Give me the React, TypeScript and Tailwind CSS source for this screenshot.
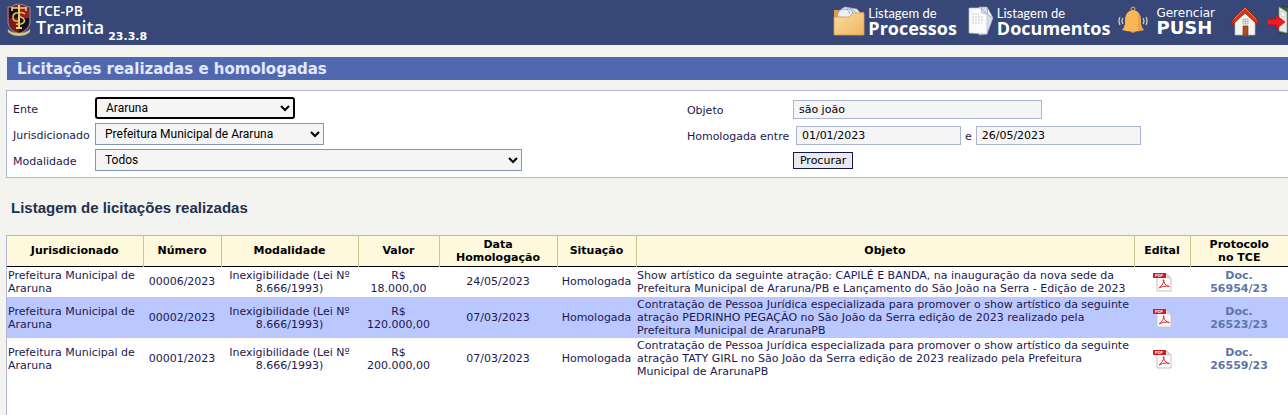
import { ReactNode, useState } from "react";

interface ILicitacao {
  numero: string;
  modalidade: string;
  valor: string;
  data: string;
  situacao: string;
  objeto: string;
  protocolo: string;
}

const licitacoes: ILicitacao[] = [
  {
    numero: "00006/2023",
    modalidade: "Inexigibilidade (Lei Nº 8.666/1993)",
    valor: "18.000,00",
    data: "24/05/2023",
    situacao: "Homologada",
    objeto:
      "Show artístico da seguinte atração: CAPILÉ E BANDA, na inauguração da nova sede da Prefeitura Municipal de Araruna/PB e Lançamento do São João na Serra - Edição de 2023",
    protocolo: "56954/23",
  },
  {
    numero: "00002/2023",
    modalidade: "Inexigibilidade (Lei Nº 8.666/1993)",
    valor: "120.000,00",
    data: "07/03/2023",
    situacao: "Homologada",
    objeto:
      "Contratação de Pessoa Jurídica especializada para promover o show artístico da seguinte atração PEDRINHO PEGAÇÃO no São João da Serra edição de 2023 realizado pela Prefeitura Municipal de ArarunaPB",
    protocolo: "26523/23",
  },
  {
    numero: "00001/2023",
    modalidade: "Inexigibilidade (Lei Nº 8.666/1993)",
    valor: "200.000,00",
    data: "07/03/2023",
    situacao: "Homologada",
    objeto:
      "Contratação de Pessoa Jurídica especializada para promover o show artístico da seguinte atração TATY GIRL no São João da Serra edição de 2023 realizado pela Prefeitura Municipal de ArarunaPB",
    protocolo: "26559/23",
  },
];

// ** Icons
const CrestIcon = () => (
  <svg width="24" height="34" viewBox="0 0 24 34" fill="none" aria-hidden="true">
    <path d="M1 4 Q6 4 7 2 Q12 0 17 2 Q18 4 23 4 V20 Q22 27 12 31 Q2 27 1 20Z" fill="#8f1f22" stroke="#8b8da0" />
    <path d="M2 5 H12 V30 Q3 26 2 20Z" fill="#15131c" />
    <path d="M12 15 H22 V20 Q21 26 12 30Z" fill="#15131c" />
    <path d="M2 15 H12 V30 Q3 26 2 20Z" fill="#7d1b20" />
    <path d="M5 5 H19 M5 4 V8 M19 4 V8" stroke="#edcf72" strokeWidth="1.6" />
    <path d="M12 2 V24 M9 25 H15" stroke="#edcf72" strokeWidth="2" />
    <path d="M11 10 H9 Q6 11 6 14 Q6 18 9 18 H11 M18 11 Q14 8 12 11 Q12 14 16 15 Q19 18 16 20 Q13 22 9 21" stroke="#e2bd5c" strokeWidth="1.6" />
    <path d="M1 26 Q4 30 12 30 Q20 30 23 26 L23 29 Q19 33 12 33 Q5 33 1 29Z" fill="#d9cd8c" stroke="#8b8358" strokeWidth=".5" />
  </svg>
);

const FolderIcon = () => (
  <svg width="32" height="30" viewBox="0 0 32 30" aria-hidden="true">
    <defs>
      <linearGradient id="folder" x1="0" y1="0" x2="1" y2="1">
        <stop stopColor="#fcdca0" />
        <stop offset="1" stopColor="#f0b55f" />
      </linearGradient>
    </defs>
    <path d="M1 4 H8 L10 6 H31 V16 H1Z" fill="#d99a4b" />
    <path d="M4 11 Q6 3 12 1 L24 3 L28 8 L22 12Z" fill="#eef1f8" stroke="#9aa5bd" strokeWidth=".6" />
    <path d="M9 4 Q15 1 17 8 M13 3 Q19 2 20 8 M17 2 L25 8" stroke="#8794b3" strokeWidth=".8" fill="none" />
    <path d="M1 11 H16 L20 7 H31 V29 H1Z" fill="url(#folder)" stroke="#d79b51" strokeWidth=".8" />
  </svg>
);

const DocumentsIcon = () => (
  <svg width="26" height="30" viewBox="0 0 26 30" aria-hidden="true">
    <path d="M11 1 H19 L25 12 L19 28 L11 29Z" fill="#d9dfe9" stroke="#9ba6bb" strokeWidth=".6" />
    <path d="M19 2 L20 9 L25 12" fill="#fff" stroke="#8d98b0" strokeWidth=".7" />
    <path d="M1 2 H13 L19 8 V28 L1 27Z" fill="#fafbfd" stroke="#b6bdcb" strokeWidth=".7" />
    <path d="M13 2 L14 7 L19 8Z" fill="#dce2ec" stroke="#9ba6bb" strokeWidth=".7" />
    <path d="M4 8 H11 M4 11 H15 M4 14 H15 M4 17 H14" stroke="#c6c9d1" strokeDasharray="2 1" />
  </svg>
);

const BellIcon = () => (
  <svg width="30" height="28" viewBox="0 0 30 28" fill="none" aria-hidden="true">
    <circle cx="15" cy="3" r="2" stroke="#f4b459" />
    <path d="M11 24 Q15 30 19 24Z" fill="#d98f32" />
    <path d="M4 24 Q6 22 7 18 Q6 5 15 4 Q24 5 23 18 Q24 22 26 24 Q15 27 4 24Z" fill="#f9b556" />
    <path d="M20 7 Q23 10 22 18 Q23 22 25 24 L20 25Z" fill="#e9a043" />
    <path d="M5 12 Q3 15 5 18 M2 11 Q0 15 2 19 M25 12 Q27 15 25 18 M28 11 Q30 15 28 19" stroke="#e7d9b5" strokeWidth="1.2" />
  </svg>
);

const HomeIcon = () => (
  <svg width="28" height="30" viewBox="0 0 28 30" aria-hidden="true">
    <path d="M4 14 L14 6 L24 14 V29 H4Z" fill="#f4f3ef" stroke="#b7b4ad" strokeWidth=".7" />
    <path d="M14 1 L27 14 V19 L14 7 L1 19 V14Z" fill="#d73517" stroke="#8f1d0c" strokeWidth=".8" />
    <path d="M3 13 L14 2 L25 13" stroke="#f47a52" fill="none" />
    <path d="M12 20 H17 V29 H12Z" fill="#a8501f" stroke="#77300f" strokeWidth=".6" />
    <path d="M12 13 H17 V18 H12Z M14.500 13 V18 M12 15.500 H17" fill="#e6e9ec" stroke="#a9a9a9" strokeWidth=".7" />
  </svg>
);

const ExitIcon = () => (
  <svg width="21" height="28" viewBox="0 0 21 28" aria-hidden="true">
    <path d="M12 1 H21 V27 H12Z" fill="#3f7f3b" stroke="#2b3c2c" />
    <path d="M12 2 H21 V27 L18 22 V8Z" fill="#2f6b33" />
    <path d="M12 1 L20 6 V27 L12 25Z" fill="#e9e9e6" stroke="#8f928e" strokeWidth=".7" />
    <path d="M14 5 L18 7 V11 L14 10Z" fill="#f8f8f7" stroke="#b9b9b5" strokeWidth=".6" />
    <path d="M0 13 H9 V9 L18 16 L9 23 V19 H0Z" fill="#ed1c24" stroke="#a90d13" strokeWidth=".7" />
  </svg>
);

const PdfIcon = () => (
  <svg width="20" height="20" viewBox="0 0 20 20" className="mx-auto" aria-hidden="true">
    <path d="M5 2 H15 L19 6 V19 H5Z" fill="#fbfbfb" stroke="#c4c4c4" />
    <path d="M15 2 V6 H19Z" fill="#dedede" stroke="#bdbdbd" strokeWidth=".6" />
    <path d="M7 16 Q11 13 12 9 Q12 7 11 8 Q12 13 17 15 Q18 14 16 14 Q10 14 7 16Z" fill="none" stroke="#e0232b" strokeWidth=".9" />
    <path d="M1 1 H14 V6 H1Z" fill="#cf1820" />
    <text x="3" y="5" fontSize="4" fontWeight="bold" fill="#fff" fontFamily="Liberation Sans">PDF</text>
  </svg>
);

// ** UI
const NavText = ({ top, bottom }: { top: string; bottom: string }) => (
  <span className="flex flex-col">
    <span className="font-['Lato',sans-serif] text-[13px] leading-[14px]">{top}</span>
    <span className="font-['Open_Sans',sans-serif] text-lg leading-4 font-bold">{bottom}</span>
  </span>
);

const Field = ({ id, label, wide, children }: { id: string; label: string; wide?: boolean; children: ReactNode }) => (
  <div className="flex h-[26px] items-center">
    <label htmlFor={id} className={`shrink-0 pt-0.5 whitespace-nowrap ${wide ? "w-[106px]" : "w-[82px]"}`}>
      {label}
    </label>
    {children}
  </div>
);

const selectStyle = "h-[22px] bg-[#f5f5f5] pl-[5px] font-['Roboto',sans-serif] text-xs text-black";
const inputStyle = "h-[19px] border border-[#aab6d0] bg-[#f5f5f5] px-[5px] text-[11px] text-black";
const thStyle = "border-r border-[#cfc58d] px-1 last:border-r-0";

const App = () => {
  const [filtro, setFiltro] = useState({
    objeto: "são joão",
    inicio: "01/01/2023",
    fim: "26/05/2023",
  });

  return (
    <div className="flex min-h-screen flex-col overflow-hidden bg-[#f3f4ef] font-['DejaVu_Sans',Verdana,sans-serif] text-[11px] leading-[13px] text-[#1c1850]">
      <header className="flex h-[45px] items-start justify-between bg-[#364778] text-white">
        <a href="#inicio" className="flex items-start pt-[3px] pl-[7px]">
          <CrestIcon />
          <span className="ml-[5px] flex flex-col font-['Open_Sans',sans-serif] font-semibold">
            <span className="text-sm leading-4">TCE-PB</span>
            <span className="text-lg leading-4">Tramita</span>
          </span>
          <span className="mt-[27px] ml-1 font-bold">23.3.8</span>
        </a>
        <nav className="flex shrink-0 items-start pt-[6px]">
          <a href="#processos" className="flex gap-[3px]">
            <FolderIcon />
            <NavText top="Listagem de" bottom="Processos" />
          </a>
          <a href="#documentos" className="ml-[11px] flex gap-[3px]">
            <DocumentsIcon />
            <NavText top="Listagem de" bottom="Documentos" />
          </a>
          <a href="#push" className="ml-2 flex gap-2">
            <BellIcon />
            <span className="flex flex-col">
              <span className="text-xs leading-[14px]">Gerenciar</span>
              <span className="text-lg leading-4 font-bold">PUSH</span>
            </span>
          </a>
          <a href="#home" aria-label="Início" className="ml-4">
            <HomeIcon />
          </a>
          <a href="#sair" aria-label="Sair" className="ml-2">
            <ExitIcon />
          </a>
        </nav>
      </header>

      <main className="flex flex-1 flex-col pt-3 pl-[6px]">
        <h1 className="ml-px h-[23px] bg-[#5068b0] pl-[10px] text-[15px] leading-[25px] font-bold text-[#e4e8ff]">
          Licitações realizadas e homologadas
        </h1>

        <form
          className="mt-[10px] grid grid-cols-[37fr_33fr] border-y border-l border-[#b3b6d6] bg-white py-1 pl-[6px]"
          onSubmit={(event) => event.preventDefault()}
        >
          <div>
            <Field id="ente" label="Ente">
              <select id="ente" className={`${selectStyle} w-[200px] rounded-[3px] border-2 border-black`}>
                <option>Araruna</option>
              </select>
            </Field>
            <Field id="jurisdicionado" label="Jurisdicionado">
              <select id="jurisdicionado" className={`${selectStyle} w-[229px] border border-[#8199b5]`}>
                <option>Prefeitura Municipal de Araruna</option>
              </select>
            </Field>
            <Field id="modalidade" label="Modalidade">
              <select id="modalidade" className={`${selectStyle} w-[427px] border border-[#8199b5]`}>
                <option>Todos</option>
              </select>
            </Field>
          </div>
          <div className="h-[78px] pt-px">
            <Field id="objeto" label="Objeto" wide>
              <input
                id="objeto"
                className={`${inputStyle} w-[249px]`}
                value={filtro.objeto}
                onChange={(event) => setFiltro({ ...filtro, objeto: event.target.value })}
              />
            </Field>
            <Field id="inicio" label="Homologada entre" wide>
              <input
                id="inicio"
                className={`${inputStyle} ml-[3px] w-[165px]`}
                value={filtro.inicio}
                onChange={(event) => setFiltro({ ...filtro, inicio: event.target.value })}
              />
              <label htmlFor="fim" className="mx-1 pt-0.5">
                e
              </label>
              <input
                id="fim"
                className={`${inputStyle} w-[165px]`}
                value={filtro.fim}
                onChange={(event) => setFiltro({ ...filtro, fim: event.target.value })}
              />
            </Field>
            <div className="pt-1 pl-[106px]">
              <button type="submit" className="h-[17px] border border-[#0f1a4a] bg-[#e9e9ef] px-[6px] leading-[15px] text-black">
                Procurar
              </button>
            </div>
          </div>
        </form>

        <h2 className="mt-5 pl-[5px] font-['Liberation_Sans',Arial,sans-serif] text-[15px] leading-5 font-bold text-[#25304f]">
          Listagem de licitações realizadas
        </h2>

        <section className="mt-[17px] flex-1 border-t border-l border-[#b3b6d6] bg-white">
          <table className="w-full table-fixed border-collapse">
            <colgroup>
              <col className="w-[136px]" />
              <col className="w-[78px]" />
              <col className="w-[137px]" />
              <col className="w-[81px]" />
              <col className="w-[118px]" />
              <col className="w-[79px]" />
              <col />
              <col className="w-[56px]" />
              <col className="w-[98px]" />
            </colgroup>
            <thead className="border-b border-black bg-[#fef8dc] text-black">
              <tr className="h-[30px]">
                <th className={thStyle}>Jurisdicionado</th>
                <th className={thStyle}>Número</th>
                <th className={thStyle}>Modalidade</th>
                <th className={thStyle}>Valor</th>
                <th className={thStyle}>Data Homologação</th>
                <th className={thStyle}>Situação</th>
                <th className={thStyle}>Objeto</th>
                <th className={thStyle}>Edital</th>
                <th className={thStyle}>
                  Protocolo
                  <br />
                  no TCE
                </th>
              </tr>
            </thead>
            <tbody>
              {licitacoes.map((item) => (
                <tr key={item.numero} className="h-[31px] text-center even:bg-[#bbc7ff]">
                  <td className="p-px text-left">Prefeitura Municipal de Araruna</td>
                  <td className="p-px">{item.numero}</td>
                  <td className="p-px">{item.modalidade}</td>
                  <td className="p-px">
                    R$
                    <br />
                    {item.valor}
                  </td>
                  <td className="p-px">{item.data}</td>
                  <td className="p-px">{item.situacao}</td>
                  <td className="p-px text-left">{item.objeto}</td>
                  <td className="p-px">
                    <a href={`#edital-${item.numero}`} aria-label="Edital em PDF">
                      <PdfIcon />
                    </a>
                  </td>
                  <td className="p-px">
                    <a href={`#doc-${item.protocolo}`} className="font-bold text-[#5d76a5]">
                      Doc.
                      <br />
                      {item.protocolo}
                    </a>
                  </td>
                </tr>
              ))}
            </tbody>
          </table>
        </section>
      </main>
    </div>
  );
};

export default App;
